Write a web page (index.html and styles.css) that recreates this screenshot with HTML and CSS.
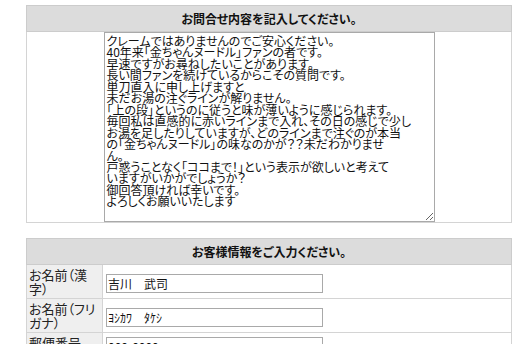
FILE: index.html
```html
<!DOCTYPE html>
<html lang="ja">
<head>
    <meta charset="UTF-8">
    <title>お問合せ</title>
    <link rel="stylesheet" href="styles.css">
</head>
<body>
    <div class="page">
        <!-- お問合せ内容 -->
        <table class="form-table inquiry">
            <tr>
                <th>お問合せ内容を記入してください。</th>
            </tr>
            <tr>
                <td class="message-cell">
<textarea class="message" wrap="off">クレームではありませんのでご安心ください。
40年来「金ちゃんヌードル」ファンの者です。
早速ですがお尋ねしたいことがあります。
長い間ファンを続けているからこその質問です。
単刀直入に申し上げますと
未だお湯の注ぐラインが解りません。
「上の段」というのに従うと味が薄いように感じられます。
毎回私は直感的に赤いラインまで入れ、その日の感じで少し
お湯を足したりしていますが、どのラインまで注ぐのが本当
の「金ちゃんヌードル」の味なのかが？？未だわかりませ
ん。
戸惑うことなく「ココまで！」という表示が欲しいと考えて
いますがいかがでしょうか？
御回答頂ければ幸いです。
よろしくお願いいたします</textarea>
                </td>
            </tr>
        </table>

        <!-- お客様情報 -->
        <table class="form-table customer">
            <tr>
                <th colspan="2">お客様情報をご入力ください。</th>
            </tr>
            <tr>
                <td class="label">お名前（漢字）</td>
                <td class="field"><input type="text" value="吉川　武司"></td>
            </tr>
            <tr>
                <td class="label">お名前（フリガナ）</td>
                <td class="field"><input type="text" value="ﾖｼｶﾜ　ﾀｹｼ"></td>
            </tr>
            <tr>
                <td class="label">郵便番号</td>
                <td class="field"><input type="text" value="000-0000"></td>
            </tr>
        </table>
    </div>
</body>
</html>
```

FILE: styles.css
```css
/* 全体 */
body {
    margin: 0;
    background-color: #fff;
    color: #000;
    font-family: "Noto Sans CJK JP", sans-serif;
}
.page {
    padding: 5px 13px 0 26px;
}

/* フォームテーブル */
.form-table {
    width: 486px;
    border-collapse: collapse;
    border: 1px solid #ccc;
    margin-bottom: 15px;
}
.form-table th {
    height: 25px;
    padding: 0;
    background-color: #dcdcdc;
    border: 1px solid #ccc;
    font-size: 12px;
    font-weight: bold;
    color: #111;
    text-align: center;
    font-feature-settings: "palt";
}
.form-table td {
    border: 1px solid #d4d4d4;
    padding: 0;
}

/* お問合せ内容 */
.message-cell {
    text-align: center;
    padding: 4px 0 5px;
    line-height: 0;
}
.message {
    box-sizing: border-box;
    width: 331px;
    height: 190px;
    margin: 0;
    padding: 2px;
    border: 1px solid #a9a9a9;
    font-family: "Noto Sans CJK JP", sans-serif;
    font-size: 12px;
    line-height: 11.45px;
    color: #111;
    overflow: hidden;
    font-feature-settings: "palt";
    vertical-align: top;
}

/* お客様情報 */
.customer .label {
    width: 71px;
    padding: 3px 2px 2px;
    background-color: #efefef;
    font-size: 13px;
    line-height: 14px;
    color: #222;
    font-feature-settings: "palt";
    vertical-align: top;
}
.customer .field {
    padding: 0 3px;
    background-color: #fff;
}
.customer input {
    box-sizing: border-box;
    width: 217px;
    height: 19px;
    margin: 0;
    padding: 0 1px;
    border: 1px solid #a9a9a9;
    font-family: "Noto Sans CJK JP", sans-serif;
    font-size: 12px;
    color: #111;
    font-feature-settings: "palt";
}
```
